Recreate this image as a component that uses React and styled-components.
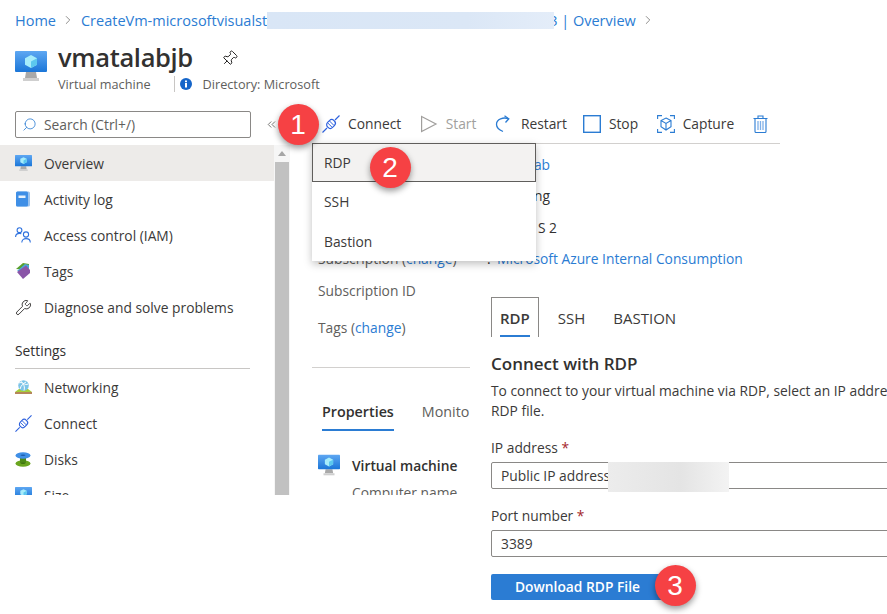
import React from "react"
import styled, { createGlobalStyle } from "styled-components"
import { ChevronRight, Search, Wrench, Pin, ChevronsLeft } from "lucide-react"

const GlobalStyle = createGlobalStyle`
    html, body { margin: 0; padding: 0; background: #fff; }
    * { box-sizing: border-box; }
    body { font-family: "Open Sans", "Noto Sans", sans-serif; font-size: 13.8px; color: #323130; }
`

const BLUE = "#2b7cd3"

const Page = styled.div`
    position: relative;
    width: 887px;
    height: 614px;
    overflow: hidden;
    background: #fff;
`
const Breadcrumb = styled.div`
    height: 40px;
    padding-left: 15px;
    display: flex;
    align-items: center;
    white-space: nowrap;
    font-size: 14.5px;
    color: ${BLUE};
    svg { color: #605e5c; margin: 0 5.5px; }
`
const Redacted = styled.span`
    display: inline-block;
    width: 287px;
    height: 17px;
    margin-right: -5px;
    position: relative;
    background: linear-gradient(90deg, #d9e6f6, #dbe7f6 70%, #e4edf9);
`
const Header = styled.div`
    height: 60px;
    padding: 1px 0 0 15px;
    display: flex;
    gap: 11px;
`
const HeaderIcon = styled.div`
    margin-top: 10px;
`
const HeaderText = styled.div`
    display: flex;
    flex-direction: column;
`
const TitleRow = styled.div`
    display: flex;
    align-items: center;
    height: 32px;
    gap: 28px;
    svg { transform: rotate(45deg); color: #201f1e; margin-top: 3px; }
`
const Title = styled.h1`
    margin: 0;
    font-size: 25.5px;
    font-weight: 600;
    letter-spacing: -0.35px;
    color: #323130;
`
const SubRow = styled.div`
    display: flex;
    align-items: center;
    font-size: 12.7px;
    color: #605e5c;
    height: 20px;
    margin-top: 1px;
`
const SubDivider = styled.span`
    width: 1px;
    height: 16px;
    background: #c8c6c4;
    margin: 0 5px 0 23px;
`
const SubDirectory = styled.span`
    margin-left: 11px;
`
const Body = styled.div`
    display: flex;
`
const Sidebar = styled.aside`
    width: 290px;
    height: 395px;
    flex-shrink: 0;
    overflow: hidden;
    padding-top: 11px;
`
const SearchRow = styled.div`
    display: flex;
    align-items: center;
    padding-left: 15px;
    height: 26px;
    margin-bottom: 8px;
    > svg { margin-left: 14px; color: #323130; }
`
const SearchBox = styled.div`
    width: 236px;
    height: 27px;
    border: 1px solid #8a8886;
    border-radius: 2px;
    display: flex;
    align-items: center;
    gap: 7px;
    padding-left: 6px;
    color: #605e5c;
    svg { transform: scaleX(-1); color: ${BLUE}; }
`
const NavArea = styled.div`
    display: flex;
`
const NavList = styled.div`
    width: 274px;
`
const NavItem = styled.div`
    height: 36px;
    display: flex;
    align-items: center;
    padding-left: 15px;
    background: ${p => (p.$active ? "#edebe9" : "transparent")};
    white-space: nowrap;
    color: #3b3a39;
`
const NavIcon = styled.span`
    width: 29px;
    display: flex;
    align-items: center;
    flex-shrink: 0;
`
const NavHeading = styled.div`
    margin: 1px 24px 0 15px;
    height: 43px;
    line-height: 36px;
    padding-top: 7px;
    border-bottom: 1px solid #c8c6c4;
    color: #323130;
`
const ScrollTrack = styled.div`
    width: 16px;
    padding: 0 1px;
    background: #f6f6f6;
    display: flex;
    flex-direction: column;
`
const ScrollArrow = styled.div`
    height: 17px;
    display: flex;
    justify-content: center;
    align-items: center;
    &::before {
        content: "";
        border-left: 4px solid transparent;
        border-right: 4px solid transparent;
        border-bottom: 5px solid #a6a6a6;
    }
`
const ScrollThumb = styled.div`
    flex: 1;
    background: #c1c1c1;
`
const Main = styled.main`
    position: relative;
    margin-left: 22px;
    flex: 1;
    min-width: 0;
`
const Toolbar = styled.div`
    width: 468px;
    height: 44px;
    padding: 4px 0 0 10px;
    border-bottom: 1px solid #d2d0ce;
    display: flex;
    align-items: center;
    gap: 18.5px;
`
const ToolButton = styled.div`
    display: flex;
    align-items: center;
    gap: 8px;
    margin-right: ${p => p.$pull || 0}px;
    color: ${p => (p.$disabled ? "#a19f9d" : "#3b3a39")};
`
const Menu = styled.div`
    position: absolute;
    top: 43px;
    left: 0;
    width: 224px;
    height: 118px;
    background: #fff;
    box-shadow: 0 3px 8px rgba(0, 0, 0, 0.25);
    z-index: 2;
`
const MenuItem = styled.div`
    height: ${p => (p.$active ? "39px" : "39.5px")};
    display: flex;
    align-items: center;
    padding-left: ${p => (p.$active ? "11px" : "12px")};
    background: ${p => (p.$active ? "#f3f2f1" : "#fff")};
    border: ${p => (p.$active ? "1px solid #605e5c" : "none")};
    color: #3b3a39;
`
const Essentials = styled.div`
    padding: 5px 0 0.8px;
`
const EssentialRow = styled.div`
    height: 31.3px;
    display: flex;
    align-items: center;
    white-space: nowrap;
`
const EssentialLabel = styled.div`
    width: 175px;
    padding-left: 6px;
    color: #605e5c;
`
const Colon = styled.span`
    width: 10px;
    color: #323130;
`
const EssentialTail = styled.div`
    width: ${p => p.$end}px;
    text-align: right;
`
const Link = styled.a`
    color: ${BLUE};
`
const Lower = styled.div`
    display: flex;
`
const LeftCol = styled.div`
    width: 158px;
    height: 220px;
    flex-shrink: 0;
    overflow: hidden;
    white-space: nowrap;
`
const InfoRow = styled.div`
    height: 32px;
    line-height: 32px;
    padding-left: 6px;
    margin-bottom: 5px;
    color: #605e5c;
`
const Rule = styled.div`
    height: 1px;
    margin-top: 23px;
    background: #d2d0ce;
`
const PropTabs = styled.div`
    margin-top: 32px;
    display: flex;
    padding-left: 10px;
    gap: 28px;
    height: 32px;
`
const PropTab = styled.div`
    height: 31px;
    line-height: 24px;
    font-size: 14.3px;
    border-bottom: ${p => (p.$active ? `2px solid ${BLUE}` : "none")};
    font-weight: ${p => (p.$active ? 600 : 400)};
    color: ${p => (p.$active ? "#323130" : "#605e5c")};
`
const Section = styled.div`
    margin-top: 22px;
    padding-left: 6px;
    display: flex;
    gap: 12px;
`
const SectionText = styled.div`
    padding-top: 2px;
`
const SectionTitle = styled.div`
    font-weight: 600;
    line-height: 20px;
    margin-bottom: 7px;
`
const SectionLine = styled.div`
    color: #605e5c;
`
const Panel = styled.section`
    flex: 1;
    min-width: 0;
    padding: 22px 0 0 21px;
    white-space: nowrap;
`
const PanelTabs = styled.div`
    display: flex;
    height: 40px;
`
const PanelTab = styled.div`
    position: relative;
    height: 40px;
    line-height: 40px;
    padding: 0 8px;
    margin-right: ${p => p.$gap}px;
    border: ${p => (p.$active ? "1px solid #8a8886" : "1px solid transparent")};
    border-bottom: none;
    font-size: 15px;
    font-weight: ${p => (p.$active ? 600 : 400)};
    color: #3b3a39;
    &::after {
        content: "";
        display: ${p => (p.$active ? "block" : "none")};
        position: absolute;
        left: 8px;
        right: 8px;
        bottom: 0;
        height: 2px;
        background: ${BLUE};
    }
`
const PanelTitle = styled.h2`
    margin: 16px 0 6px;
    font-size: 17px;
    line-height: 22px;
    font-weight: 600;
    color: #323130;
`
const PanelDesc = styled.p`
    margin: 0 0 17px;
    line-height: 20px;
    font-size: 13.8px;
    color: #3b3a39;
`
const FieldLabel = styled.div`
    line-height: 20px;
    margin-bottom: 4px;
    color: #3b3a39;
    span { color: #a4262c; }
`
const Field = styled.div`
    position: relative;
    width: calc(100% + 10px);
    height: 27px;
    line-height: 25px;
    padding-left: 9px;
    border: 1px solid #8a8886;
    border-radius: 2px;
    margin-bottom: 17px;
    color: #3b3a39;
`
const FieldRedaction = styled.div`
    position: absolute;
    left: 116px;
    top: -1px;
    width: 121px;
    height: 30px;
    background: linear-gradient(90deg, #ececec, #e4e4e4 60%, #f3f3f3);
`
const PrimaryButton = styled.button`
    display: block;
    width: 175px;
    height: 26px;
    margin-top: 16px;
    padding: 0 2px 0 0;
    border: none;
    border-radius: 2px;
    background: ${BLUE};
    color: #fff;
    font: 600 13.8px "Open Sans", sans-serif;
`
const Badge = styled.div`
    position: absolute;
    left: ${p => p.$x - 20.5}px;
    top: ${p => p.$y - 20.5}px;
    width: 41px;
    height: 41px;
    border-radius: 50%;
    background: #f64144;
    color: #fff;
    font: 28px/41px "Liberation Sans", Arial, sans-serif;
    text-align: center;
    box-shadow: 0 3px 6px rgba(0, 0, 0, 0.4);
    z-index: 3;
`

let uid = 0
const VmIcon = ({ w = 17, h = 16 }) => {
    const id = `vm${uid++}`
    return (
        <svg width={w} height={h} viewBox="0 0 32 30" style={{ flexShrink: 0, display: "block" }}>
            <defs>
                <linearGradient id={id} x1="0" y1="0" x2="0" y2="1">
                    <stop offset="0" stopColor="#5ea7f2" />
                    <stop offset="1" stopColor="#1b76d8" />
                </linearGradient>
            </defs>
            <path d="M11 21h10l1 6H10z" fill="#a9a9a9" />
            <rect x="8" y="27" width="16" height="3" fill="#cfcfcf" />
            <rect x="0" y="0" width="32" height="21" rx="1" fill={`url(#${id})`} />
            <path d="M16 4l6 3.2v6.6L16 17l-6-3.2V7.200z" fill="#a6ecfb" />
            <path d="M16 10.400l6-3.200v6.600L16 17z" fill="#5cc8ee" />
        </svg>
    )
}
const BookIcon = () => (
    <svg width="16" height="16" viewBox="0 0 16 16">
        <rect x="1" y="0.500" width="14" height="15" rx="1.500" fill="#9cc3ee" />
        <rect x="1" y="0.500" width="12" height="15" rx="1.500" fill="#3f8fe6" />
        <rect x="3.500" y="4.500" width="7" height="2.500" fill="#e8f2fc" />
    </svg>
)
const PeopleIcon = () => (
    <svg width="17" height="16" viewBox="0 0 17 16" fill="none" stroke="#2f72de" strokeWidth="1.100">
        <circle cx="4.500" cy="3.200" r="2.400" />
        <path d="M0.600 10c0-2.300 1.700-3.600 4-3.600 0.600 0 1.200 0.100 1.700 0.300" />
        <circle cx="11" cy="7.500" r="2.600" />
        <path d="M6.800 15.500c0-2.400 1.900-3.900 4.200-3.900s4.300 1.500 4.300 3.900" />
    </svg>
)
const TagIcon = () => (
    <svg width="16" height="18" viewBox="0 0 16 18">
        <path d="M1 7L8 1l6 1v6z" fill="#5aa02c" />
        <path d="M2 9l8-7 4 1v7z" fill="#4aa6d9" />
        <path d="M2 10l9-6.500L15 8v3l-7 6z" fill="#8a55a8" />
    </svg>
)
const NetworkIcon = () => (
    <svg width="17" height="15" viewBox="0 0 17 15">
        <path d="M0 12l4-3h9l4 3z" fill="#a5ce3a" />
        <rect x="0" y="12" width="17" height="2" fill="#b5865a" />
        <circle cx="8.500" cy="5.500" r="5.300" fill="#7cc4e8" />
        <path d="M4 3c3-2 6 3 9 1M5 9c1-4 4-6 6-7M6 1.500c3 2 4 6 3 9" stroke="#fff" strokeWidth="1" fill="none" />
    </svg>
)
const PlugIcon = ({ size = 18 }) => (
    <svg width={size} height={size} viewBox="0 0 18 18" fill="none" stroke="#2f62de" strokeWidth="1.200" style={{ flexShrink: 0 }}>
        <path d="M0.500 17.500l4.500-4.500M13 5l4.500-4.500" />
        <rect x="4.500" y="5.500" width="9" height="7" rx="3.200" transform="rotate(-45 9 9)" />
        <path d="M7.500 6l4.500 4.500M5.800 8l4.300 4.300" strokeWidth="1" />
    </svg>
)
const DisksIcon = () => (
    <svg width="16" height="15" viewBox="0 0 16 15">
        <ellipse cx="8" cy="11.500" rx="7.500" ry="3.300" fill="#6aa51f" />
        <rect x="5" y="6" width="6" height="5" fill="#4d8a17" />
        <ellipse cx="8" cy="3.500" rx="7.500" ry="3.300" fill="#3f8fe6" />
        <ellipse cx="8" cy="3.200" rx="2.500" ry="0.700" fill="#1c5fae" />
        <ellipse cx="8" cy="11.200" rx="2.500" ry="0.700" fill="#3f7210" />
    </svg>
)
const PlayIcon = () => (
    <svg width="18" height="18" viewBox="0 0 18 18" fill="none" stroke="#a19f9d" strokeWidth="1.200">
        <path d="M1.600 1.500L16 9 1.600 16.500z" />
    </svg>
)
const RestartIcon = () => (
    <svg width="18" height="18" viewBox="0 0 18 18" fill="none" stroke={BLUE} strokeWidth="1.300">
        <path d="M13.500 3.800C8.500 1.800 1.500 4 1.500 9.300c0 3 2 5.500 6.500 7.200" />
        <path d="M9.500 0.800l4.300 3-3.300 3.700" />
    </svg>
)
const StopIcon = () => (
    <svg width="18" height="18" viewBox="0 0 18 18" fill="none" stroke={BLUE} strokeWidth="1.400">
        <rect x="0.700" y="0.700" width="16.600" height="16.600" />
    </svg>
)
const CaptureIcon = () => (
    <svg width="18" height="18" viewBox="0 0 18 18" fill="none" stroke={BLUE} strokeWidth="1.100">
        <path d="M0.600 4V0.600H5M13 0.600h4.400V4M0.600 14v3.400H5M13 17.400h4.400V14" />
        <path d="M9 3l5 2.600v6L9 15l-5-3.400v-6zM4 5.600L9 8.400l5-2.800M9 8.400V15" />
    </svg>
)
const TrashIcon = () => (
    <svg width="15" height="18" viewBox="1.500 0 15 18" fill="none" stroke={BLUE} strokeWidth="1.100">
        <path d="M2 3.500h14M6.500 3.500V1h5v2.500" />
        <path d="M3.500 3.500v13a1 1 0 0 0 1 1h9a1 1 0 0 0 1-1v-13" />
        <path d="M6.500 6v9M9 6v9M11.500 6v9" strokeWidth="1.300" stroke="#7fb0e8" />
    </svg>
)
const InfoIcon = () => (
    <svg width="12" height="12" viewBox="0 0 12 12" style={{ flexShrink: 0 }}>
        <circle cx="6" cy="6" r="6" fill="#1565c9" />
        <rect x="5" y="5" width="2" height="4.500" fill="#fff" />
        <rect x="5" y="2.500" width="2" height="1.700" fill="#fff" />
    </svg>
)

const NAV_TOP = [
    { label: "Overview", icon: <VmIcon />, active: true },
    { label: "Activity log", icon: <BookIcon /> },
    { label: "Access control (IAM)", icon: <PeopleIcon /> },
    { label: "Tags", icon: <TagIcon /> },
    { label: "Diagnose and solve problems", icon: <Wrench size={17} color="#323130" strokeWidth={1.300} /> },
]
const NAV_SETTINGS = [
    { label: "Networking", icon: <NetworkIcon /> },
    { label: "Connect", icon: <PlugIcon size={17} /> },
    { label: "Disks", icon: <DisksIcon /> },
    { label: "Size", icon: <VmIcon /> },
]

const App = () => {
    return (
        <Page>
            <GlobalStyle />
            <Breadcrumb>
                Home <ChevronRight size={14} strokeWidth={1.200} />
                CreateVm-microsoftvisualst<Redacted />3 | Overview <ChevronRight size={14} strokeWidth={1.200} />
            </Breadcrumb>
            <Header>
                <HeaderIcon><VmIcon w={32} h={30} /></HeaderIcon>
                <HeaderText>
                    <TitleRow>
                        <Title>vmatalabjb</Title>
                        <Pin size={17} strokeWidth={1.300} />
                    </TitleRow>
                    <SubRow>
                        Virtual machine
                        <SubDivider />
                        <InfoIcon />
                        <SubDirectory>Directory: Microsoft</SubDirectory>
                    </SubRow>
                </HeaderText>
            </Header>
            <Body>
                <Sidebar>
                    <SearchRow>
                        <SearchBox>
                            <Search size={15} strokeWidth={1.300} />
                            Search (Ctrl+/)
                        </SearchBox>
                        <ChevronsLeft size={13} strokeWidth={1.200} />
                    </SearchRow>
                    <NavArea>
                        <NavList>
                            {NAV_TOP.map(item => (
                                <NavItem key={item.label} $active={item.active}><NavIcon>{item.icon}</NavIcon>{item.label}</NavItem>
                            ))}
                            <NavHeading>Settings</NavHeading>
                            {NAV_SETTINGS.map(item => (
                                <NavItem key={item.label}><NavIcon>{item.icon}</NavIcon>{item.label}</NavItem>
                            ))}
                        </NavList>
                        <ScrollTrack>
                            <ScrollArrow />
                            <ScrollThumb />
                        </ScrollTrack>
                    </NavArea>
                </Sidebar>
                <Main>
                    <Toolbar>
                        <ToolButton><PlugIcon />Connect</ToolButton>
                        <ToolButton $disabled><PlayIcon />Start</ToolButton>
                        <ToolButton $pull={-2.5}><RestartIcon />Restart</ToolButton>
                        <ToolButton><StopIcon />Stop</ToolButton>
                        <ToolButton><CaptureIcon />Capture</ToolButton>
                        <ToolButton><TrashIcon /></ToolButton>
                    </Toolbar>
                    <Menu>
                        <MenuItem $active>RDP</MenuItem>
                        <MenuItem>SSH</MenuItem>
                        <MenuItem>Bastion</MenuItem>
                    </Menu>
                    <Essentials>
                        <EssentialRow>
                            <EssentialTail $end={238}><Link>ab</Link></EssentialTail>
                        </EssentialRow>
                        <EssentialRow>
                            <EssentialTail $end={238}>ng</EssentialTail>
                        </EssentialRow>
                        <EssentialRow>
                            <EssentialTail $end={245}>S 2</EssentialTail>
                        </EssentialRow>
                        <EssentialRow>
                            <EssentialLabel>Subscription (<Link>change</Link>)</EssentialLabel>
                            <Colon>:</Colon>
                            <Link>Microsoft Azure Internal Consumption</Link>
                        </EssentialRow>
                    </Essentials>
                    <Lower>
                        <LeftCol>
                            <InfoRow>Subscription ID</InfoRow>
                            <InfoRow>Tags (<Link>change</Link>)</InfoRow>
                            <Rule />
                            <PropTabs>
                                <PropTab $active>Properties</PropTab>
                                <PropTab>Monitoring</PropTab>
                            </PropTabs>
                            <Section>
                                <VmIcon w={22} h={22} />
                                <SectionText>
                                    <SectionTitle>Virtual machine</SectionTitle>
                                    <SectionLine>Computer name</SectionLine>
                                </SectionText>
                            </Section>
                        </LeftCol>
                        <Panel>
                            <PanelTabs>
                                <PanelTab $active $gap={10}>RDP</PanelTab>
                                <PanelTab $gap={10}>SSH</PanelTab>
                                <PanelTab $gap={0}>BASTION</PanelTab>
                            </PanelTabs>
                            <PanelTitle>Connect with RDP</PanelTitle>
                            <PanelDesc>
                                To connect to your virtual machine via RDP, select an IP address and port number<br />
                                RDP file.
                            </PanelDesc>
                            <FieldLabel>IP address <span>*</span></FieldLabel>
                            <Field>
                                Public IP address
                                <FieldRedaction />
                            </Field>
                            <FieldLabel>Port number <span>*</span></FieldLabel>
                            <Field>3389</Field>
                            <PrimaryButton>Download RDP File</PrimaryButton>
                        </Panel>
                    </Lower>
                </Main>
            </Body>
            <Badge $x={298} $y={124}>1</Badge>
            <Badge $x={390} $y={167}>2</Badge>
            <Badge $x={675} $y={585}>3</Badge>
        </Page>
    )
}

export default App
